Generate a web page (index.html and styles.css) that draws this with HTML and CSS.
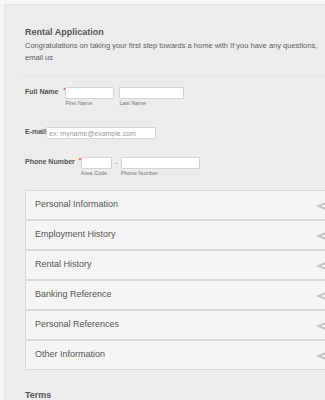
FILE: index.html
```html
<!DOCTYPE html>
<html>
<head>
<meta charset="utf-8">
<link rel="stylesheet" href="styles.css">
</head>
<body>
<div class="form">
  <div class="header">
    <h1 class="title">Rental Application</h1>
    <p class="desc">Congratulations on taking your first step towards a home with If you have any questions, email us</p>
  </div>

  <div class="fields">
    <div class="row row-name">
      <span class="label">Full Name</span><span class="req">*</span>
      <div class="field">
        <input class="input w-first" type="text">
        <span class="sub">First Name</span>
      </div>
      <div class="field">
        <input class="input w-last" type="text">
        <span class="sub">Last Name</span>
      </div>
    </div>

    <div class="row row-email">
      <span class="label">E-mail</span>
      <input class="input w-email" type="text" placeholder="ex: myname@example.com">
    </div>

    <div class="row row-phone">
      <span class="label">Phone Number</span><span class="req req-phone">*</span>
      <div class="field">
        <input class="input w-area" type="text">
        <span class="sub">Area Code</span>
      </div>
      <span class="dash">-</span>
      <div class="field">
        <input class="input w-phone" type="text">
        <span class="sub">Phone Number</span>
      </div>
    </div>
  </div>

  <div class="accordion">
    <div class="acc-item"><span>Personal Information</span><svg class="acc-icon" viewBox="0 0 12 8" width="12" height="8"><path d="M0 4 L8 0.5 L12 1.5 L5 4 L12 6.5 L8 7.5 Z" fill="#c4c4c4"/></svg></div>
    <div class="acc-item"><span>Employment History</span><svg class="acc-icon" viewBox="0 0 12 8" width="12" height="8"><path d="M0 4 L8 0.5 L12 1.5 L5 4 L12 6.5 L8 7.5 Z" fill="#c4c4c4"/></svg></div>
    <div class="acc-item"><span>Rental History</span><svg class="acc-icon" viewBox="0 0 12 8" width="12" height="8"><path d="M0 4 L8 0.5 L12 1.5 L5 4 L12 6.5 L8 7.5 Z" fill="#c4c4c4"/></svg></div>
    <div class="acc-item"><span>Banking Reference</span><svg class="acc-icon" viewBox="0 0 12 8" width="12" height="8"><path d="M0 4 L8 0.5 L12 1.5 L5 4 L12 6.5 L8 7.5 Z" fill="#c4c4c4"/></svg></div>
    <div class="acc-item"><span>Personal References</span><svg class="acc-icon" viewBox="0 0 12 8" width="12" height="8"><path d="M0 4 L8 0.5 L12 1.5 L5 4 L12 6.5 L8 7.5 Z" fill="#c4c4c4"/></svg></div>
    <div class="acc-item"><span>Other Information</span><svg class="acc-icon" viewBox="0 0 12 8" width="12" height="8"><path d="M0 4 L8 0.5 L12 1.5 L5 4 L12 6.5 L8 7.5 Z" fill="#c4c4c4"/></svg></div>
  </div>

  <h2 class="terms">Terms</h2>
</div>
</body>
</html>
```

FILE: styles.css
```css
html, body {
  margin: 0;
  padding: 0;
  overflow: hidden;
}
body {
  background: #f5f5f5;
  font-family: "Liberation Sans", Arial, sans-serif;
  color: #555;
}
.form {
  margin: 4px 0 0 4px;
  width: 340px;
  min-height: 420px;
  background: #ececec;
  border-left: 1px solid #e2e2e2;
  border-top: 1px solid #e2e2e2;
  padding: 0 0 0 20px;
  box-sizing: border-box;
}
.header {
  padding-top: 21px;
  padding-bottom: 12px;
  border-bottom: 1px solid #e2e2e2;
  margin-left: -3px;
  padding-left: 3px;
}
.title {
  margin: 0;
  font-size: 9px;
  line-height: 12px;
  font-weight: bold;
  color: #555;
}
.desc {
  margin: 2px 0 0 0;
  width: 300px;
  font-size: 7.5px;
  line-height: 12px;
  color: #5e5e5e;
}
.fields {
  padding-top: 10px;
}
.row {
  display: flex;
  align-items: flex-start;
}
.row-email {
  margin-top: 20px;
}
.row-phone {
  margin-top: 18px;
}
.label {
  font-size: 7px;
  line-height: 9px;
  font-weight: bold;
  color: #555;
}
.req {
  color: #e03131;
  font-size: 6px;
  line-height: 6px;
  width: 2px;
  overflow: visible;
  margin-left: 5px;
  font-weight: bold;
}
.req-phone {
  margin-left: 4px;
}
.field {
  display: flex;
  flex-direction: column;
}
.field + .field {
  margin-left: 5px;
}
.input {
  display: block;
  height: 12px;
  box-sizing: border-box;
  margin: 0;
  padding: 0 2px;
  border: 1px solid #d4d4d4;
  border-radius: 1px;
  background: #fff;
  font-family: "Liberation Sans", Arial, sans-serif;
  font-size: 7px;
  color: #555;
  outline: none;
}
.input::placeholder {
  color: #999;
}
.w-first { width: 49px; }
.w-last { width: 65px; }
.w-email { width: 110px; }
.w-area { width: 31px; }
.w-phone { width: 79px; }
.sub {
  font-size: 5.5px;
  line-height: 7px;
  color: #777;
  margin-top: 1px;
}
.dash {
  width: 9px;
  text-align: center;
  font-size: 7px;
  line-height: 12px;
  color: #666;
}
.accordion {
  margin-top: 13px;
  width: 310px;
}
.acc-item {
  display: flex;
  align-items: center;
  justify-content: space-between;
  height: 30px;
  box-sizing: border-box;
  padding: 0 6px 2px 9px;
  background: #f4f4f4;
  border: 1px solid #d9d9d9;
  font-size: 9px;
  color: #555;
}
.acc-icon {
  margin-top: 3px;
}
.terms {
  margin: 19px 0 0 0;
  font-size: 9px;
  line-height: 12px;
  font-weight: bold;
  color: #555;
}
```
